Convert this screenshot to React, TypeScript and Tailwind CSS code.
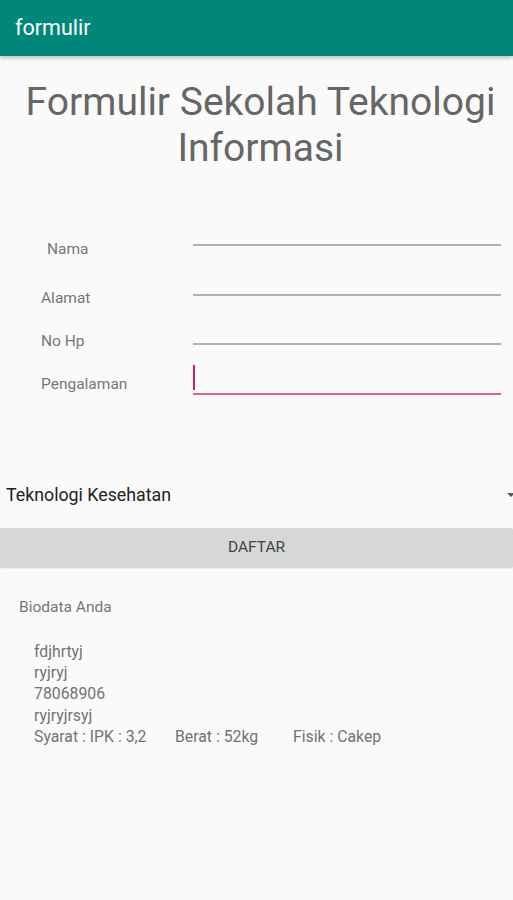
const fields = [
  { label: "Nama", lx: "pl-[47px]", row: "h-[50px]", lt: "pt-[19px]", mt: "mt-[24px]" },
  { label: "Alamat", lx: "pl-[41px]", row: "h-[50px]", lt: "pt-[18px]", mt: "mt-[24px]" },
  { label: "No Hp", lx: "pl-[41px]", row: "h-[45px]", lt: "pt-[11px]", mt: "mt-[23px]" },
];

const App = () => {
  return (
    <div className="min-h-[900px] w-[513px] bg-[#fafafa] font-['Roboto',sans-serif]">
      <div className="flex h-14 items-center bg-[#00877a] pl-[15px] text-[21.5px] text-white shadow-[0_2px_4px_rgba(0,0,0,0.25)]">
        formulir
      </div>

      <h1 className="mt-[23px] pl-[8px] text-center text-[39px] leading-[46px] text-[#666]">
        Formulir Sekolah Teknologi
        <br />
        Informasi
      </h1>

      <div className="mt-[49px] flex flex-col text-[15.5px] leading-[20px] text-[#777]">
        {fields.map((f) => (
          <div key={f.label} className={`flex ${f.row} items-start`}>
            <div className={`w-[193px] ${f.lx} ${f.lt}`}>{f.label}</div>
            <div className={`mr-[12px] ${f.mt} h-[2px] flex-1 bg-[#b0b0b0]`} />
          </div>
        ))}
        <div className="flex h-[32px] items-start">
          <div className="w-[193px] pl-[41px] pt-[9px]">Pengalaman</div>
          <div className="mr-[12px] flex flex-1 flex-col">
            <div className="h-[25px] w-[2px] bg-[#d81b60]" />
            <div className="mt-[3px] h-[2px] bg-[#e0608e]" />
          </div>
        </div>
      </div>

      <div className="mt-[76px] flex h-[44px] items-center justify-between pl-[6px]">
        <span className="text-[17.8px] text-[#222]">Teknologi Kesehatan</span>
        <span className="mr-[-2px] h-0 w-0 border-x-[4px] border-t-[4px] border-x-transparent border-t-[#555]" />
      </div>

      <button className="mt-[11px] flex h-[39px] w-full items-center justify-center rounded-[2px] bg-[#d6d7d7] text-[15.5px] text-[#444] shadow-[0_1px_2px_rgba(0,0,0,0.2)]">
        DAFTAR
      </button>

      <div className="mt-[30px] pl-[19px] text-[15.5px] leading-[20px] text-[#777]">
        Biodata Anda
      </div>

      <div className="mt-[24px] flex flex-col pl-[34px] text-[15.8px] leading-[21.2px] text-[#727272]">
        <span>fdjhrtyj</span>
        <span>ryjryj</span>
        <span>78068906</span>
        <span>ryjryjrsyj</span>
        <div className="flex">
          <span className="w-[141px]">Syarat : IPK : 3,2</span>
          <span className="w-[118px]">Berat : 52kg</span>
          <span>Fisik : Cakep</span>
        </div>
      </div>
    </div>
  );
};

export default App;
